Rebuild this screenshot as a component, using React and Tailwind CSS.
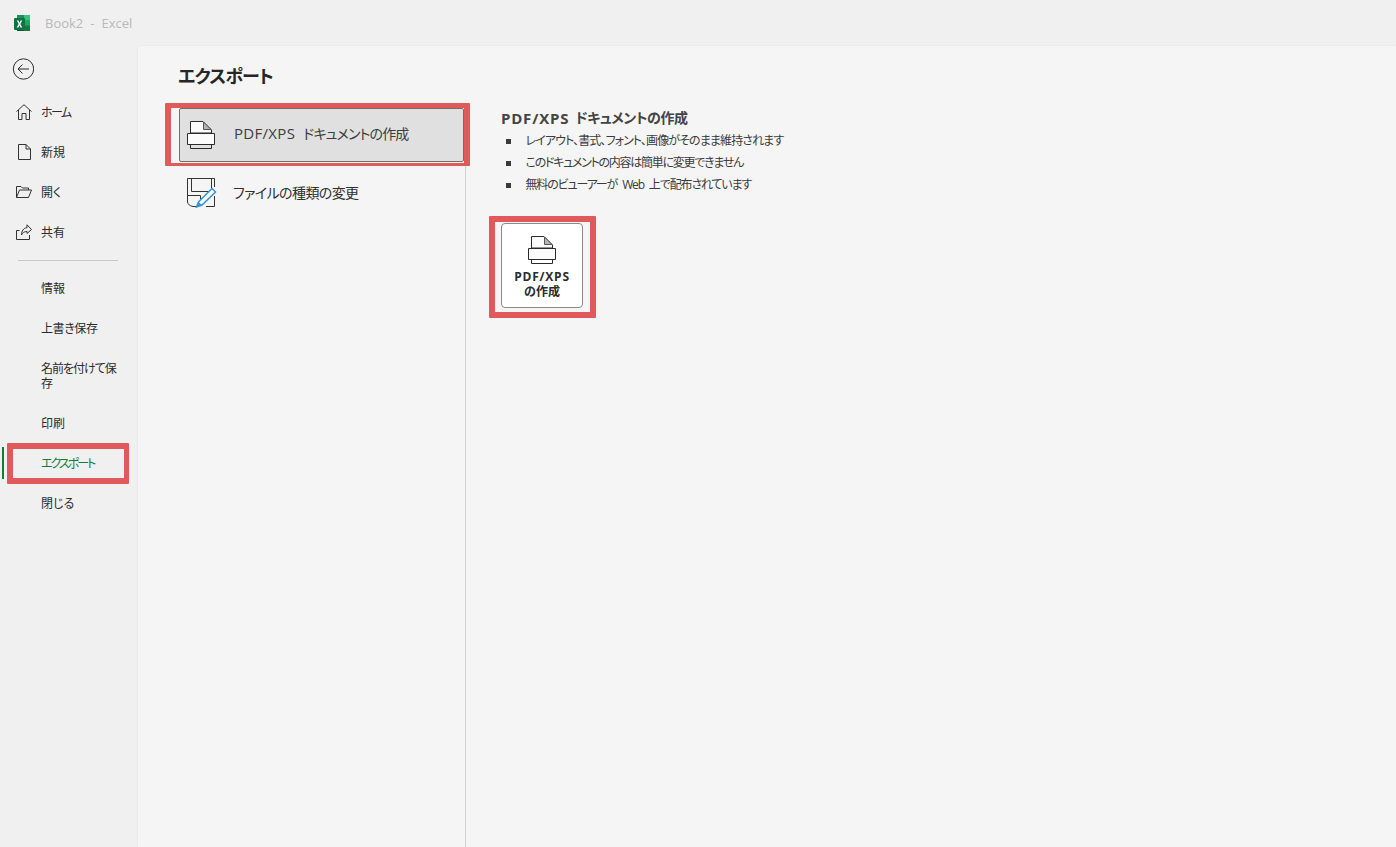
const FONT = "font-['Open_Sans','Noto_Sans_CJK_JP',sans-serif] [font-feature-settings:'palt']";

const S = { fill: "none", stroke: "currentColor", strokeWidth: 1 };

function ExcelLogo() {
  return (
    <svg width="16" height="16" viewBox="0 0 16 16" className="block">
      <rect x="3" y="0" width="13" height="16" rx="1" fill="#21a366" />
      <rect x="3" y="0" width="7" height="5.3" fill="#1d8f5a" />
      <rect x="10" y="0" width="6" height="5.3" fill="#33c481" />
      <rect x="3" y="5.3" width="7" height="5.3" fill="#107c41" />
      <rect x="10" y="5.3" width="6" height="5.3" fill="#21a366" />
      <rect x="3" y="10.6" width="7" height="5.4" fill="#185c37" />
      <rect x="10" y="10.6" width="6" height="5.4" fill="#107c41" />
      <rect x="0" y="3" width="11" height="12" rx="1" fill="#0f7440" />
      <path d="M2.8 5.6h1.7L5.5 7.7l1.1-2.1h1.6L6.4 9l1.9 3.5H6.6L5.5 10.2l-1.1 2.3H2.7L4.6 9z" fill="#fff" />
    </svg>
  );
}

function BackIcon() {
  return (
    <svg width="22" height="22" viewBox="0 0 22 22" className="block text-[#2b2b2b]">
      <circle cx="11.5" cy="11" r="10.2" {...S} />
      <path d="M6 11H17M10.5 6.5L6 11L10.5 15.5" {...S} />
    </svg>
  );
}

function HomeIcon() {
  return (
    <svg width="16" height="16" viewBox="0 0 16 16" className="block">
      <path d="M0.5 7.5L8 0.7L15.5 7.5M2.5 6V15.5H6V9.5H10V15.5H13.5V6" {...S} />
    </svg>
  );
}

function FileIcon() {
  return (
    <svg width="13" height="16" viewBox="0 0 13 16" className="block">
      <path d="M0.5 0.5H8L12.5 5V15.5H0.5ZM8 0.5V5H12.5" {...S} />
    </svg>
  );
}

function FolderIcon() {
  return (
    <svg width="16" height="12" viewBox="0 0 16 12" className="block">
      <path d="M0.5 11.5V0.5H5L6.5 2H12.5V4M0.5 11.5H12.5L15.5 4H3.5L0.5 11.5" {...S} />
    </svg>
  );
}

function ShareIcon() {
  return (
    <svg width="16" height="16" viewBox="0 0 16 16" className="block">
      <path d="M3.5 6.5H0.5V15.5H13.5V11" {...S} />
      <path d="M11 0.8L15.5 5.5L11 9.5V7.5C8.5 7.5 6.5 8.5 5.5 11C5.5 7 7.5 4 11 3.7Z" {...S} />
    </svg>
  );
}

function PrinterIcon() {
  return (
    <svg width="28" height="28" viewBox="0 0 28 28" className="block text-[#2b2b2b]">
      <path d="M3.5 12V0.5H16L24.5 9V12H3.5Z" fill="#fbfbfb" stroke="currentColor" />
      <path d="M16.5 1V8.5H24Z" fill="#b5b5b5" stroke="#555" />
      <path d="M0.5 12.5H27.5V23.5H0.5Z" fill="#fbfbfb" stroke="currentColor" />
      <path d="M3.5 23.5V27.5H24.5V23.5" {...S} />
    </svg>
  );
}

function ChangeTypeIcon() {
  return (
    <svg width="30" height="30" viewBox="0 0 30 30" className="block">
      <path d="M0.5 24V0.5H27.5V9" fill="none" stroke="#333" />
      <path d="M0.5 24Q1 27.5 6 28.5H9" fill="none" stroke="#333" />
      <path d="M4.5 0.5V13.5H24.5V0.5" fill="none" stroke="#333" />
      <path d="M0.5 17.5H13.5V21" fill="none" stroke="#333" />
      <path d="M27.5 18V28.5H19" fill="none" stroke="#333" />
      <path d="M25 10.5L28.5 14L15 27L9.5 29L11.5 24Z" fill="#fbfbfb" stroke="#2f96dd" strokeWidth="1.5" />
      <path d="M11.5 24L15 27L9.5 29Z" fill="#2f96dd" />
    </svg>
  );
}

function NavItem({ icon, children, h = "h-10", active, track = "" }) {
  return (
    <div className={`relative flex items-center ${h} pl-[41px] text-xs leading-[15px] ${active ? "text-[#107c41]" : "text-[#2b2b2b]"}`}>
      {icon && <span className="absolute left-[16px] top-0 bottom-0 flex w-4 items-center justify-center text-[#333]">{icon}</span>}
      <span className={track}>{children}</span>
      {active && <span className="absolute left-[2px] top-1 h-8 w-0.5 bg-[#107c41]" />}
    </div>
  );
}

function Annotation({ className }) {
  return <div className={`pointer-events-none absolute rounded-[1px] border-[#e05a5c] ${className}`} />;
}

export default function App() {
  return (
    <div className={`relative flex h-[847px] w-[1396px] flex-col overflow-hidden bg-[#f0f0f0] ${FONT}`}>
      <header className="flex h-[46px] shrink-0 items-center pl-[14px]">
        <ExcelLogo />
        <span className="ml-[15px] pt-px text-[13px] text-[#b9b9b9]">Book2</span>
        <span className="ml-[7px] pt-px text-[13px] text-[#b9b9b9]">-</span>
        <span className="ml-[7px] pt-px text-[13px] text-[#b9b9b9]">Excel</span>
      </header>

      <div className="flex min-h-0 flex-1">
        <aside className="w-[138px] shrink-0">
          <div className="flex h-[46px] items-center pl-3">
            <BackIcon />
          </div>
          <nav>
            <NavItem icon={<HomeIcon />} track="tracking-[-1.6px]">ホーム</NavItem>
            <NavItem icon={<FileIcon />}>新規</NavItem>
            <NavItem icon={<FolderIcon />}>開く</NavItem>
            <NavItem icon={<ShareIcon />}>共有</NavItem>
            <div className="mx-[18px] mt-2 mb-[7px] h-px w-[100px] bg-[#c9c9c9]" />
            <NavItem>情報</NavItem>
            <NavItem track="tracking-[-0.4px]">上書き保存</NavItem>
            <NavItem h="h-[55px]" track="tracking-[-1px]">名前を付けて保<br />存</NavItem>
            <NavItem>印刷</NavItem>
            <NavItem active track="tracking-[-2px]">エクスポート</NavItem>
            <NavItem>閉じる</NavItem>
          </nav>
        </aside>

        <main className="flex min-w-0 flex-1 rounded-tl-[3px] bg-[#f5f5f5] shadow-[0_0_2px_rgba(0,0,0,0.08)]">
          <section className="flex w-[328px] shrink-0 flex-col">
            <h1 className="ml-10 mt-[17px] h-[45px] text-lg leading-[26px] font-bold tracking-[-0.8px] text-[#262626]">エクスポート</h1>
            <div className="flex min-h-0 flex-1 flex-col border-r border-[#d2d2d2] pl-[41px]">
              <div className="mr-px flex h-[54px] items-center rounded-[2px] border border-[#6e6e6e] bg-[#e0e0e0] pl-[7px] text-sm text-[#3c3c3c]">
                <PrinterIcon />
                <span className="ml-[19px] pb-[2px] text-[15px] tracking-[0.3px]">PDF/XPS</span>
                <span className="ml-[8px] pb-[2px] tracking-[-0.85px]">ドキュメントの作成</span>
              </div>
              <div className="flex h-[62px] items-center pl-[8px] text-sm text-[#303030]">
                <ChangeTypeIcon />
                <span className="ml-4 tracking-[-0.6px]">ファイルの種類の変更</span>
              </div>
            </div>
          </section>

          <section className="pl-[35px] pt-[62px]">
            <h2 className="flex items-center text-sm leading-5 font-bold text-[#444]">
              <span className="text-[15px] tracking-[0.8px]">PDF/XPS</span>
              <span className="ml-[6px] tracking-[-0.4px]">ドキュメントの作成</span>
            </h2>
            <ul className="mt-[2px] text-xs text-[#3a3a3a]">
              {[
                ["レイアウト、書式、フォント、画像がそのまま維持されます", "tracking-[-0.9px]"],
                ["このドキュメントの内容は簡単に変更できません", "tracking-[-1.27px]"],
                ["無料のビューアーが Web 上で配布されています", "tracking-[-1.15px] [word-spacing:3px]"],
              ].map(([t, track]) => (
                <li key={t} className="flex h-[22px] items-center">
                  <span className="ml-[5px] h-[5px] w-[5px] bg-[#3a3a3a]" />
                  <span className={`ml-[14.5px] ${track}`}>{t}</span>
                </li>
              ))}
            </ul>
            <button className="mt-[27px] flex h-[85px] w-[82px] flex-col items-center rounded-[4px] border border-[#8a8a8a] bg-white pt-3 text-xs leading-[15px] font-bold text-[#2b2b2b]">
              <PrinterIcon />
              <span className="mt-[5px]"><span className="tracking-[0.8px]">PDF/XPS</span><br />の作成</span>
            </button>
          </section>
        </main>
      </div>

      <Annotation className="left-[7px] top-[443px] h-[41px] w-[122px] border-t-[6px] border-r-[5px] border-b-[6px] border-l-[6px]" />
      <Annotation className="left-[165px] top-[103px] h-[63px] w-[305px] border-t-[5px] border-r-[6px] border-b-[3px] border-l-[6px]" />
      <Annotation className="left-[489px] top-[216px] h-[102px] w-[107px] border-[6px]" />
    </div>
  );
}
